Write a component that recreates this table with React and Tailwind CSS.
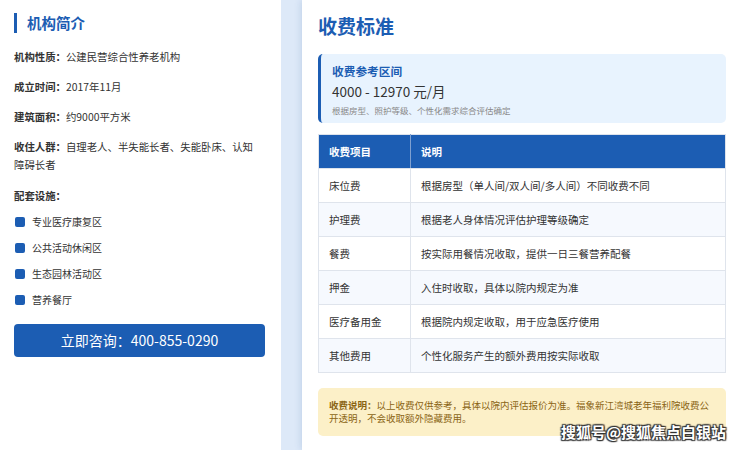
import React from "react";

const rows = [
  ["床位费", "根据房型（单人间/双人间/多人间）不同收费不同"],
  ["护理费", "根据老人身体情况评估护理等级确定"],
  ["餐费", "按实际用餐情况收取，提供一日三餐营养配餐"],
  ["押金", "入住时收取，具体以院内规定为准"],
  ["医疗备用金", "根据院内规定收取，用于应急医疗使用"],
  ["其他费用", "个性化服务产生的额外费用按实际收取"],
];

const facilities = ["专业医疗康复区", "公共活动休闲区", "生态园林活动区", "营养餐厅"];

export default function App() {
  return (
    <div
      className="relative w-[740px] h-[450px] overflow-hidden flex bg-[#dde9f8] text-[#333333]"
      style={{ fontFamily: '"Noto Sans CJK SC", "Noto Sans", sans-serif' }}
    >
      {/* Left panel */}
      <div className="w-[281px] h-full bg-white pl-[14px] pr-[16px] pt-[13px] flex flex-col shrink-0">
        <div className="flex items-center h-[20px]">
          <div className="w-[3px] h-[20px] bg-[#1c5db3]" />
          <div className="ml-[10px] text-[14.5px] leading-[20px] font-bold text-[#1c5db3]">机构简介</div>
        </div>
        <div className="mt-[15px] flex flex-col gap-[12px] text-[10.4px] leading-[18px] w-[246px]">
          <div><span className="font-bold">机构性质：</span>公建民营综合性养老机构</div>
          <div><span className="font-bold">成立时间：</span>2017年11月</div>
          <div><span className="font-bold">建筑面积：</span>约9000平方米</div>
          <div><span className="font-bold">收住人群：</span>自理老人、半失能长者、失能卧床、认知障碍长者</div>
          <div className="mt-[1px] font-bold">配套设施：</div>
        </div>
        <div className="mt-[8px] flex flex-col gap-[8px] text-[10px] leading-[18px]">
          {facilities.map((f) => (
            <div key={f} className="flex items-center">
              <div className="w-[10px] h-[10px] rounded-[2px] bg-[#1c5db3] ml-[1px]" />
              <span className="ml-[7px]">{f}</span>
            </div>
          ))}
        </div>
        <div className="mt-[15px] h-[33px] w-[251px] rounded-[4px] bg-[#1c5db3] flex items-center justify-center text-white text-[14px]">
          立即咨询：400-855-0290
        </div>
      </div>

      {/* Right panel */}
      <div className="ml-[21px] w-[438px] h-full bg-white pl-[16px] pr-[14px] pt-[14px] shrink-0 shadow-[-2px_0_6px_rgba(30,80,150,0.12)]">
        <div className="text-[19px] leading-[24px] font-bold text-[#1c5db3]">收费标准</div>
        <div className="mt-[16px] w-[408px] rounded-[5px] bg-[#e8f3fe] border-l-[3px] border-[#1c5db3] pl-[11px] pt-[9px] pb-[7px]">
          <div className="text-[11.7px] leading-[16px] font-bold text-[#1c5db3]">收费参考区间</div>
          <div className="mt-[2px] text-[13.5px] leading-[20px] text-[#333333]">4000 - 12970 元/月</div>
          <div className="mt-[3px] text-[8.5px] leading-[12px] text-[#888888]">根据房型、照护等级、个性化需求综合评估确定</div>
        </div>
        <table className="mt-[11px] w-[408px] border-collapse text-[10.5px]">
          <thead>
            <tr className="h-[34px] bg-[#1c5db3] text-white">
              <th className="w-[92px] text-left font-bold pl-[10px] border border-[#dde3ec] border-r-[#7fa0d0]">收费项目</th>
              <th className="text-left font-bold pl-[10px] border border-[#dde3ec]">说明</th>
            </tr>
          </thead>
          <tbody>
            {rows.map((r, i) => (
              <tr key={r[0]} className={`h-[34px] ${i % 2 === 1 ? "bg-[#f6f9fe]" : "bg-white"}`}>
                <td className="pl-[10px] border border-[#dfe4ec]">{r[0]}</td>
                <td className="pl-[10px] border border-[#dfe4ec]">{r[1]}</td>
              </tr>
            ))}
          </tbody>
        </table>
        <div className="mt-[15px] w-[408px] rounded-[5px] bg-[#fcf0c8] pl-[11px] pr-[12px] pt-[11px] pb-[11px] text-[9.5px] leading-[13px] text-[#8a6414]">
          <span className="font-bold">收费说明：</span>以上收费仅供参考，具体以院内评估报价为准。福象新江湾城老年福利院收费公开透明，不会收取额外隐藏费用。
        </div>
      </div>

      <div
        className="absolute left-[561px] top-[423px] text-[15px] leading-[18px] font-bold text-white"
        style={{ textShadow: "0 0 2px #333, 1px 1px 1px #333, -1px -1px 1px #333, 1px -1px 1px #333, -1px 1px 1px #333" }}
      >
        搜狐号@搜狐焦点白银站
      </div>
    </div>
  );
}
